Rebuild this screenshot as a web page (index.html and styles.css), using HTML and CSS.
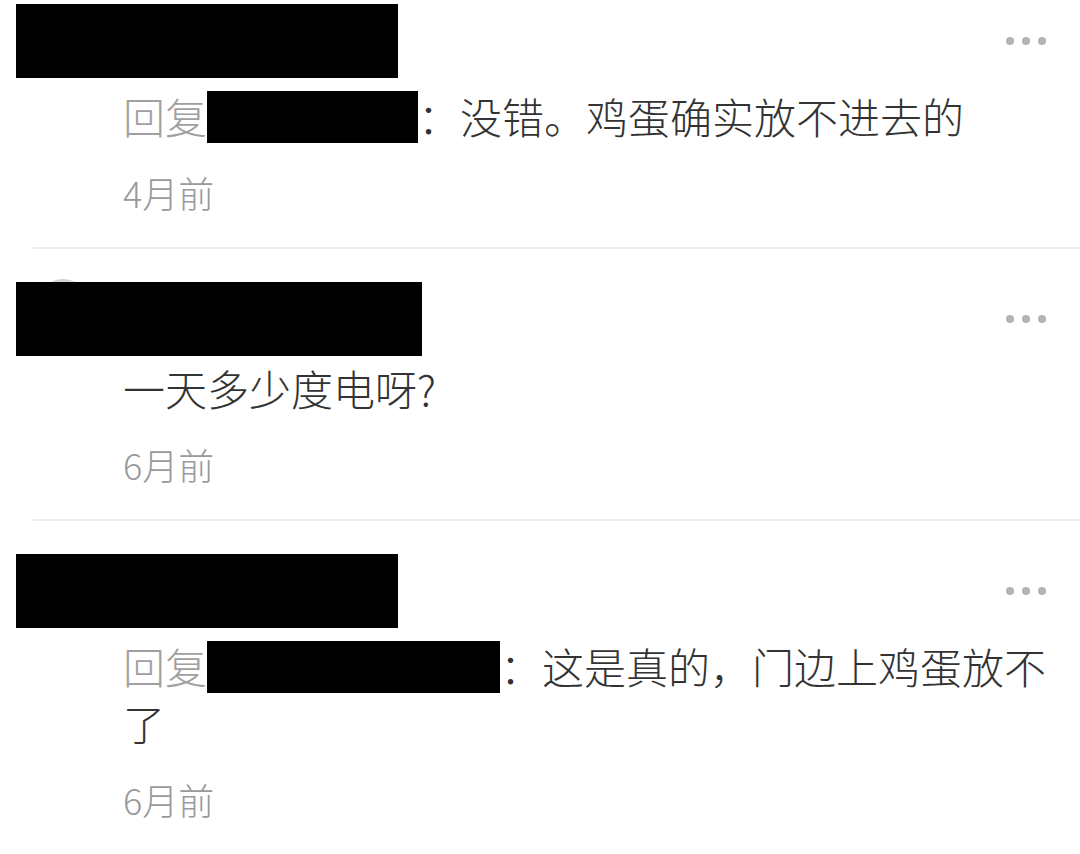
FILE: index.html
```html
<!DOCTYPE html>
<html>
<head>
    <meta charset="utf-8">
    <link rel="stylesheet" href="styles.css">
</head>
<body>
    <div class="list">
        <div class="comment">
            <div class="head">
                <div class="mask name-short"></div>
                <div class="more"><span></span><span></span><span></span></div>
            </div>
            <div class="text reply"><span class="reply-to">回复</span><span class="mask-inline to-short"></span>：没错。鸡蛋确实放不进去的</div>
            <div class="time">4月前</div>
        </div>
        <div class="divider"></div>

        <div class="comment">
            <div class="head">
                <div class="avatar"></div>
                <div class="mask name-long"></div>
                <div class="more"><span></span><span></span><span></span></div>
            </div>
            <div class="text">一天多少度电呀?</div>
            <div class="time">6月前</div>
        </div>
        <div class="divider"></div>

        <div class="comment">
            <div class="head">
                <div class="mask name-short"></div>
                <div class="more"><span></span><span></span><span></span></div>
            </div>
            <div class="text reply"><span class="reply-to">回复</span><span class="mask-inline to-long"></span>：这是真的，门边上鸡蛋放不了</div>
            <div class="time">6月前</div>
        </div>
        <div class="divider"></div>
    </div>
</body>
</html>
```

FILE: styles.css
```css
body
{
    margin: 0;
    background-color: #fff;
    font-family: "Noto Sans CJK SC", "Noto Sans", sans-serif;
}
.list
{
    padding-top: 4px;
}
.comment
{
    padding: 0 20px 0 16px;
}
.head
{
    position: relative;
    height: 74px;
    display: flex;
    align-items: center;
    justify-content: space-between;
}
.mask
{
    position: relative;
    height: 74px;
    background-color: #000;
}
.name-short
{
    width: 382px;
}
.name-long
{
    width: 406px;
}
.avatar
{
    position: absolute;
    left: 21px;
    top: -3px;
    width: 52px;
    height: 52px;
    border-radius: 50%;
    background-color: #d4d4d4;
}
.more
{
    display: flex;
    gap: 8px;
    margin-right: 14px;
}
.more span
{
    width: 8px;
    height: 8px;
    border-radius: 50%;
    background-color: #b4b4b4;
}
.text
{
    margin: 3px 0 0 107px;
    font-size: 42px;
    font-weight: 300;
    line-height: 57px;
    color: #333;
}
.text.reply
{
    margin-top: 9px;
}
.reply-to
{
    color: #a0a0a0;
}
.mask-inline
{
    display: inline-block;
    height: 52px;
    margin-top: 4px;
    vertical-align: top;
    background-color: #000;
}
.to-short
{
    width: 211px;
}
.to-long
{
    width: 293px;
}
.time
{
    margin: 24px 0 0 107px;
    font-size: 36px;
    font-weight: 300;
    line-height: 48px;
    color: #999;
}
.divider
{
    height: 2px;
    margin: 31px 0 33px 33px;
    background-color: #ededed;
}
```
